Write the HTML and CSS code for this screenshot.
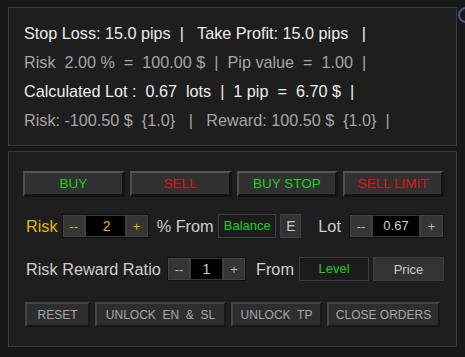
FILE: index.html
```html
<!DOCTYPE html>
<html lang="en">
<head>
    <meta charset="UTF-8">
    <title>Lot Calculator</title>
    <link rel="stylesheet" href="styles.css">
</head>
<body>
    <div class="close-dot"></div>

    <div class="panel info">
        <div class="info-line bright">Stop Loss: 15.0 pips  |   Take Profit: 15.0 pips   |</div>
        <div class="info-line dim">Risk  2.00 %  =  100.00 $  |  Pip value  =  1.00  |</div>
        <div class="info-line bright">Calculated Lot :  0.67  lots  |  1 pip  =  6.70 $  |</div>
        <div class="info-line dim">Risk: -100.50 $  {1.0}   |   Reward: 100.50 $  {1.0}  |</div>
    </div>

    <div class="panel controls">
        <div class="row trade-row">
            <button class="trade-btn green">BUY</button>
            <button class="trade-btn red">SELL</button>
            <button class="trade-btn green">BUY STOP</button>
            <button class="trade-btn red last">SELL LIMIT</button>
        </div>

        <div class="row risk-row">
            <span class="label risk-label">Risk</span>
            <div class="stepper risk-stepper">
                <button class="step-btn yellow">--</button>
                <div class="step-value yellow">2</div>
                <button class="step-btn yellow">+</button>
            </div>
            <span class="label from-label">% From</span>
            <div class="field balance">Balance</div>
            <button class="small-btn e-btn">E</button>
            <span class="label lot-label">Lot</span>
            <div class="stepper lot-stepper">
                <button class="step-btn">--</button>
                <div class="step-value center">0.67</div>
                <button class="step-btn">+</button>
            </div>
        </div>

        <div class="row ratio-row">
            <span class="label ratio-label">Risk Reward Ratio</span>
            <div class="stepper ratio-stepper">
                <button class="step-btn">--</button>
                <div class="step-value center">1</div>
                <button class="step-btn">+</button>
            </div>
            <span class="label from2-label">From</span>
            <div class="field level">Level</div>
            <button class="small-btn price-btn">Price</button>
        </div>

        <div class="row action-row">
            <button class="action-btn reset">RESET</button>
            <button class="action-btn unlock-sl">UNLOCK  EN  &amp;  SL</button>
            <button class="action-btn unlock-tp">UNLOCK  TP</button>
            <button class="action-btn close-orders">CLOSE ORDERS</button>
        </div>
    </div>
</body>
</html>
```

FILE: styles.css
```css
* {
    box-sizing: border-box;
}

body {
    margin: 0;
    width: 465px;
    height: 357px;
    overflow: hidden;
    padding: 7px 0 0 8px;
    background-color: #171717;
    font-family: "Liberation Sans", Arial, sans-serif;
    position: relative;
}

button {
    font-family: "Liberation Sans", Arial, sans-serif;
    padding: 0;
    margin: 0;
    cursor: pointer;
}

.close-dot {
    position: absolute;
    left: 458px;
    top: 7px;
    width: 16px;
    height: 16px;
    border-radius: 50%;
    border: 2px solid #4c5590;
}

.panel {
    width: 449px;
    background-color: #1e1e1e;
    border: 1px solid #3a3a3a;
}

/* info block */
.info {
    height: 139px;
    padding: 11px 15px 0;
}

.info-line {
    font-size: 16.2px;
    line-height: 29px;
    white-space: pre;
}

.bright {
    color: #ececec;
}

.dim {
    color: #a5a5a5;
}

/* controls block */
.controls {
    margin-top: 5px;
    height: 196px;
    padding: 19px 12px 0 14px;
}

.row {
    display: flex;
    align-items: center;
}

.trade-row {
    height: 26px;
    gap: 5px;
}

.trade-btn {
    width: 102px;
    height: 26px;
    font-size: 13.5px;
    background-color: #313131;
    border-style: solid;
    border-width: 2px 3px 3px 2px;
    border-color: #555 #141414 #141414 #4f4f4f;
}

.trade-btn.last {
    width: 101px;
}

.green {
    color: #1ed01e;
}

.red {
    color: #e01414;
}

.label {
    font-size: 16.3px;
    color: #cfcfcf;
}

.risk-row {
    margin-top: 17px;
    height: 24px;
}

.risk-label {
    margin-left: 3px;
    width: 36px;
    color: #e2ba00;
}

.stepper {
    display: flex;
    height: 24px;
    border: 1px solid #111;
}

.step-btn {
    width: 22px;
    height: 22px;
    font-size: 13px;
    color: #b8b8b8;
    background-color: #353535;
    border: 1px solid #444;
}

.step-btn.yellow {
    color: #e2ba00;
}

.step-value {
    height: 22px;
    background-color: #000;
    border: 1px solid #3a3a3a;
    font-size: 14px;
    line-height: 20px;
    text-align: right;
    padding-right: 14px;
}

.step-value.yellow {
    color: #e2ba00;
}

.step-value.center {
    text-align: center;
    padding-right: 0;
    color: #cfcfcf;
}

.risk-stepper .step-value {
    width: 41px;
}

.from-label {
    margin-left: 8px;
    width: 62px;
}

.field {
    height: 24px;
    border: 1px solid #3e3e3e;
    background-color: #1b1b1b;
    font-size: 13px;
    line-height: 22px;
    text-align: center;
    color: #1ed01e;
}

.balance {
    width: 59px;
}

.small-btn {
    height: 24px;
    font-size: 14px;
    color: #c8c8c8;
    background-color: #333;
    border: 1px solid #3e3e3e;
}

.e-btn {
    width: 21px;
    margin-left: 4px;
}

.lot-label {
    margin-left: 17px;
    width: 31px;
}

.lot-stepper .step-value {
    width: 48px;
    font-size: 13px;
}

.lot-stepper .step-btn:last-child {
    width: 23px;
}

.ratio-row {
    margin-top: 19px;
    height: 24px;
}

.ratio-label {
    margin-left: 3px;
    width: 141px;
}

.ratio-stepper .step-value {
    width: 33px;
}

.from2-label {
    margin-left: 10px;
    width: 43px;
}

.level {
    width: 70px;
}

.price-btn {
    width: 71px;
    margin-left: 4px;
    font-size: 13px;
}

.action-row {
    margin-top: 21px;
    height: 25px;
    gap: 5px;
    padding-left: 2px;
}

.action-btn {
    height: 25px;
    font-size: 12px;
    white-space: pre;
    color: #a8a8a8;
    background-color: #2e2e2e;
    border-style: solid;
    border-width: 2px;
    border-color: #444 #161616 #161616 #444;
}

.reset {
    width: 65px;
}

.unlock-sl {
    width: 131px;
}

.unlock-tp {
    width: 91px;
}

.close-orders {
    width: 113px;
}
```
